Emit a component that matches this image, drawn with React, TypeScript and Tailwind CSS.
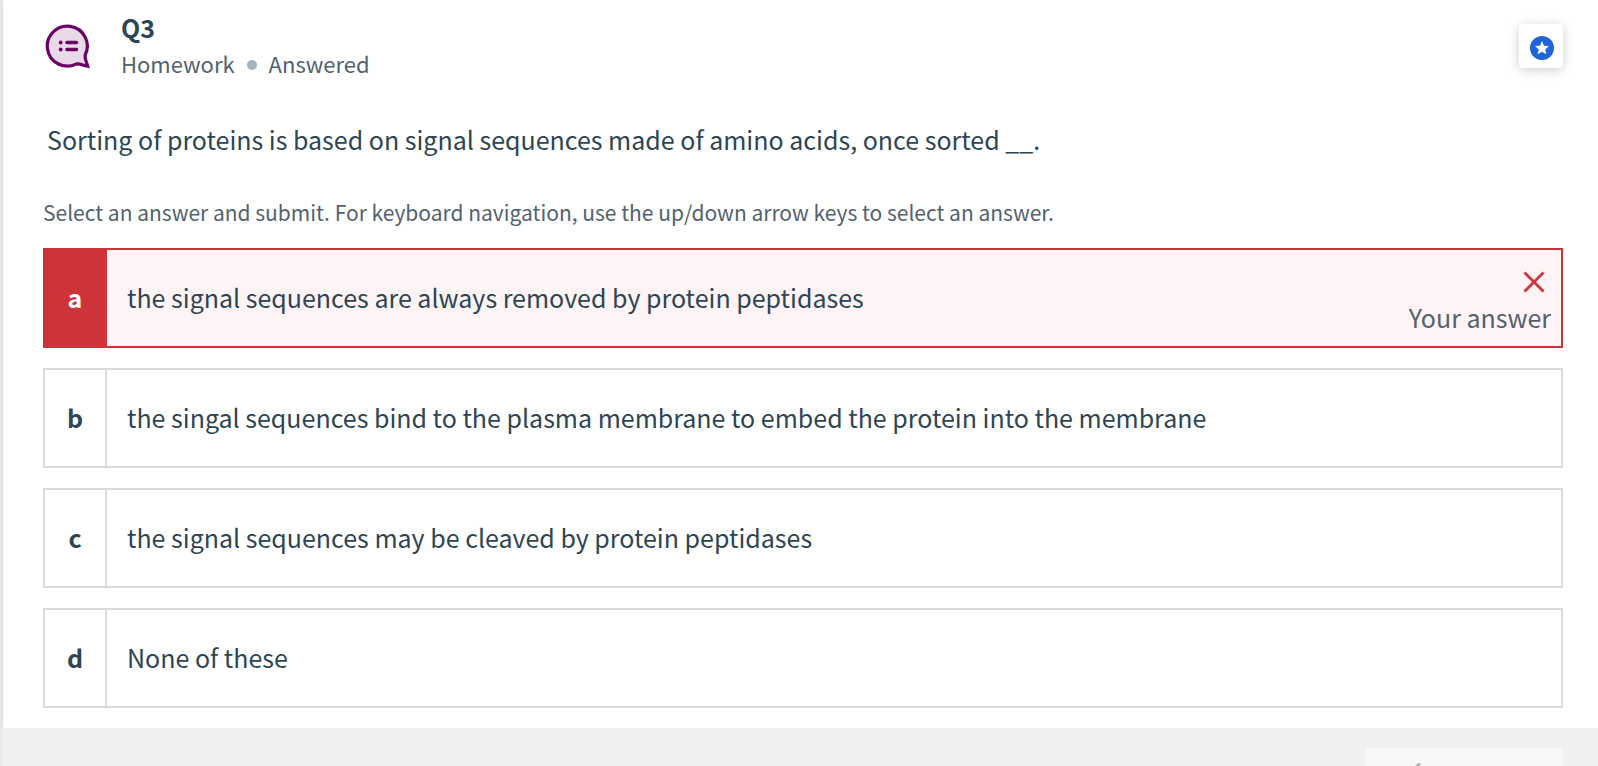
import { useState } from "react";

type Choice = { key: string; text: string };

const choices: Choice[] = [
  { key: "a", text: "the signal sequences are always removed by protein peptidases" },
  { key: "b", text: "the singal sequences bind to the plasma membrane to embed the protein into the membrane" },
  { key: "c", text: "the signal sequences may be cleaved by protein peptidases" },
  { key: "d", text: "None of these" },
];

const submitted = "a";

function QuestionIcon() {
  return (
    <svg className="mt-6 size-12 shrink-0" viewBox="0 0 48 48" fill="none" aria-hidden="true">
      <path
        d="M42.1 31.2A20 20 0 1 0 33 40.1C36 39.3 39.5 41.2 44.7 42.2C43.7 38.2 41.7 35 42.1 31.2Z"
        fill="#e8dae8"
        stroke="#6a0068"
        strokeWidth="3.2"
      />
      <circle cx="17.7" cy="18.5" r="1.9" fill="#6a0068" />
      <circle cx="17.7" cy="25.5" r="1.9" fill="#6a0068" />
      <path d="M23.9 18.5H33.5M23.9 25.5H33.5" stroke="#6a0068" strokeWidth="3.4" strokeLinecap="round" />
    </svg>
  );
}

function StarIcon() {
  return (
    <svg className="size-6" viewBox="0 0 24 24" aria-hidden="true">
      <circle cx="12" cy="12" r="12" fill="#2065d8" />
      <path d="M12 5.1l2 4.6 4.9.4-3.7 3.3 1.1 4.9L12 15.7l-4.3 2.6 1.1-4.9-3.7-3.3 4.9-.4z" fill="#fff" />
    </svg>
  );
}

function ChoiceRow({ choice }: { choice: Choice }) {
  const wrong = choice.key === submitted;
  return (
    <label
      className={
        wrong
          ? "flex min-h-25 border-2 border-[#ce333a] bg-[#fef3f5]"
          : "flex min-h-25 border-2 border-[#d8dce0] bg-white"
      }
    >
      <input type="radio" name="answer" className="sr-only" defaultChecked={wrong} />
      <span
        className={
          wrong
            ? "flex w-[62px] shrink-0 items-center justify-center border-r-2 border-[#ce333a] bg-[#ce333a] pb-0.5 font-bold text-white"
            : "flex w-[62px] shrink-0 items-center justify-center border-r-2 border-[#d8dce0] pb-0.5 font-bold"
        }
      >
        {choice.key}
      </span>
      <span className="flex grow items-center px-5 pb-0.5">{choice.text}</span>
      {wrong && (
        <span className="flex shrink-0 flex-col items-end justify-end pr-2.5 pb-[11px] text-[#53626f]">
          <svg className="mr-1.5 mb-1.5 size-[22px]" viewBox="0 0 22 22" aria-hidden="true">
            <path d="M1.5 1.5l19 19M20.5 1.5l-19 19" stroke="#ce333a" strokeWidth="2.8" />
          </svg>
          <span className="leading-9">Your answer</span>
        </span>
      )}
    </label>
  );
}

export default function App() {
  const [starred, setStarred] = useState(true);
  return (
    <div className="h-screen overflow-hidden bg-[#ebebeb] pl-[3px] font-['Noto_Sans_CJK_SC',sans-serif] text-[25px] leading-9 text-[#2d4554]">
      <main className="bg-white pr-[35px] pb-5 pl-10 shadow-[0_0_4px_rgba(0,0,0,0.12)]">
        <header className="flex items-start">
          <QuestionIcon />
          <div className="ml-[30px] grow pt-[9px]">
            <h1 className="text-[25px] leading-9 font-bold">Q3</h1>
            <p className="flex items-center text-[22px] leading-9 text-[#53626f]">
              Homework
              <span className="mx-3 mt-1 size-2.5 rounded-full bg-[#a5b2bc]" />
              Answered
            </p>
          </div>
          <button
            type="button"
            aria-label="Bookmark question"
            aria-pressed={starred}
            onClick={() => setStarred(!starred)}
            className="mt-6 flex size-11 items-center justify-center rounded-sm bg-white pl-0.5 pt-1 shadow-[0_2px_12px_rgba(0,0,0,0.2)]"
          >
            <StarIcon />
          </button>
        </header>
        <p className="mt-10 pl-1">
          Sorting of proteins is based on signal sequences made of amino acids, once sorted __.
        </p>
        <fieldset className="mt-[37px]">
          <legend className="text-[21px] leading-9 text-[#53626f]">
            Select an answer and submit. For keyboard navigation, use the up/down arrow keys to select an answer.
          </legend>
          <div className="mt-[18px] flex flex-col gap-5">
            {choices.map((c) => (
              <ChoiceRow key={c.key} choice={c} />
            ))}
          </div>
        </fieldset>
      </main>
      <footer className="flex justify-end bg-[#f0f0f0] pt-5 pr-[35px] pb-5">
        <button
          type="button"
          disabled
          aria-label="Resubmit"
          className="flex h-15 w-[198px] items-start rounded-sm bg-[#f8f8f8] pt-[15px] pl-[46px]"
        >
          <svg className="size-7" viewBox="0 0 28 28" fill="none" aria-hidden="true">
            <path d="M9 0L2 7l7 7" stroke="#a5b2bc" strokeWidth="2.6" />
            <path d="M3 7h14a8 8 0 0 1 0 16H8" stroke="#a5b2bc" strokeWidth="2.6" />
          </svg>
        </button>
      </footer>
    </div>
  );
}
